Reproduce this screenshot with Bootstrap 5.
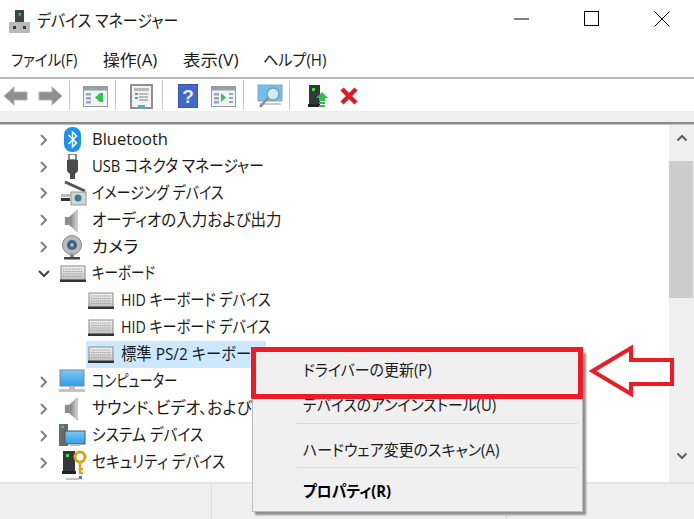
<!DOCTYPE html>
<html lang="ja">
<head>
<meta charset="utf-8">
<title>デバイス マネージャー</title>
<link href="https://cdn.jsdelivr.net/npm/bootstrap@5.3.0/dist/css/bootstrap.min.css" rel="stylesheet">
<style>
html,body{margin:0;height:100%;overflow:hidden;background:#fff}
body{font-family:"Open Sans","Noto Sans CJK JP",sans-serif;font-size:16.5px;color:#1a1a1a;line-height:1;font-feature-settings:"palt"}
.dm-win{position:relative;width:694px;height:519px;overflow:hidden}
.dm-title{height:44px;padding-left:9px}
.dm-title-text{margin-left:7px;font-size:17px;margin-top:-2px;transform-origin:left center;transform:scaleX(.88)}
.dm-winbtns{margin-left:auto;margin-right:-3px;align-self:flex-start}
.dm-winbtn{width:70px;height:38px}
.dm-menubar{height:32px;padding-left:11px;padding-top:2px;font-size:15.6px;border-bottom:2px solid #b9b9b9;box-sizing:content-box}
.dm-m1{width:92px}
.dm-m2{width:80px}
.dm-tx{display:inline-block;transform-origin:left center;white-space:nowrap}
.k80{transform:scaleX(.8)}.k82{transform:scaleX(.82)}.k85{transform:scaleX(.85)}.k86{transform:scaleX(.86)}.k89{transform:scaleX(.89)}.k90{transform:scaleX(.895)}
.k93{transform:scaleX(.93)}.k94{transform:scaleX(.94)}.k95{transform:scaleX(.95)}.k96{transform:scaleX(.96)}.k97{transform:scaleX(.97)}.k105{transform:scaleX(1.05)}.k108{transform:scaleX(1.08)}.k112{transform:scaleX(1.12)}
.dm-toolbar{height:33px;padding-left:3px;padding-top:3px}
.dm-tsep{width:1px;height:30px;background:#c8c8c8;margin-top:-3px}
.g6{margin-left:6px}.g7{margin-left:7px}.g9{margin-left:9px}.g10{margin-left:10px}.g11{margin-left:11px}.g13{margin-left:13px}.g14{margin-left:14px}.g15{margin-left:15px}.g18{margin-left:18px}
.dm-band{height:11px;background:#eeeeee}
.dm-rule{height:3px;background:#8a8a8a;border-bottom:1px solid #c4c4c4}
.dm-main{height:357px}
.dm-tree{padding-top:1.5px;overflow:hidden}
.dm-row{height:26.92px;flex:none}
.dm-chev{width:26px;margin-left:31px;flex:none}
.dm-ico{width:30px;flex:none;margin-left:2px}
.dm-lbl{margin-left:3px;white-space:nowrap;margin-top:-1px;transform-origin:left center}
.dm-child{padding-left:86px}
.dm-child .dm-ico{margin:0}
.dm-child .dm-lbl{margin-left:5px}
.dm-sel{background:#cce8ff;width:180px;margin-left:86px}
.dm-sel .dm-ico{margin:0}
.dm-sel .dm-lbl{margin-left:5px}
.dm-scroll{width:25px;background:#f0f0f0;flex:none}
.dm-scrollup{height:36px;padding-top:9px}
.dm-thumb{height:137px;width:24px;background:#cdcdcd}
.dm-scrolldown{margin-top:auto;height:22px;margin-bottom:8px}
.dm-status{height:38px;background:#f0f0f0;border-top:2px solid #e4e4e4}
.dm-cell{border-right:1px solid #dcdcdc}
.dm-c1{width:212px}
.dm-c2{width:295px}
.dm-ctx{position:absolute;display:block;left:252px;top:350px;width:331px;height:162px;min-width:0;padding:0;margin:0;background:#f0f0f0;border:1px solid #bdbdbd;border-radius:0;box-shadow:3px 3px 2px #8f8f8f;color:#1a1a1a}
.dm-ctx .dropdown-item{padding:0 0 0 50px;color:#1a1a1a;background:none;line-height:1;font-size:15.6px;display:flex;align-items:center}
.dm-i1{height:40px}
.dm-i2{height:30px}
.dm-ctx .dm-i3{height:43px;padding-top:10px}
.dm-ctx .dm-i4{height:44px;padding-top:4px;font-weight:700;color:#000}
.dm-ctx .dropdown-divider{margin:0 4px 0 44px;border-top:1px solid #dadada;opacity:1}
.dm-gap{height:2px}
.dm-redbox{position:absolute;z-index:1001;left:251px;top:347px;width:332px;height:52px;border:5px solid #ed1c24}
.dm-arrow{position:absolute;z-index:1001;left:586px;top:342px}
</style>
</head>
<body>
<svg width="0" height="0" class="position-absolute">
<defs>
<linearGradient id="gk" x1="0" y1="0" x2="0" y2="1"><stop offset="0" stop-color="#f2f2f2"/><stop offset="1" stop-color="#bdbdbd"/></linearGradient>
<linearGradient id="gs" x1="0" y1="0" x2="1" y2="0"><stop offset="0" stop-color="#777"/><stop offset="1" stop-color="#d8d8d8"/></linearGradient>
<linearGradient id="gm" x1="0" y1="0" x2="0" y2="1"><stop offset="0" stop-color="#7cc8f5"/><stop offset="1" stop-color="#2f9fe6"/></linearGradient>
<symbol id="chevr" viewBox="0 0 10 14"><path d="M2 2l5 5-5 5" fill="none" stroke="#808080" stroke-width="2"/></symbol>
<symbol id="kbd" viewBox="0 0 26 18">
<rect x="1" y="1" width="24" height="15" fill="url(#gk)" stroke="#8a8a8a"/>
<path d="M3 4h20M3 6.500h20M3 9h20M3 11.500h20" stroke="#a4a4a4" stroke-width="1.200" stroke-dasharray="1.400 .8"/>
<rect x="0" y="14.500" width="26" height="2.500" fill="#333"/>
</symbol>
<symbol id="spk" viewBox="0 0 18 28">
<path d="M1 10h5v9H1z" fill="#8c8c8c"/><path d="M6 10l9-8v25l-9-8z" fill="url(#gs)" stroke="#999" stroke-width=".6"/>
</symbol>
<symbol id="pane" viewBox="0 0 25 21">
<rect x=".5" y=".5" width="24" height="20" fill="#f3f3f3" stroke="#9a9a9a"/><rect x="1" y="1" width="23" height="3.500" fill="#9aa0a6"/>
<rect x="3" y="7" width="5" height="2.500" fill="#8fa8c8"/><rect x="3" y="11" width="5" height="2.500" fill="#8fa8c8"/><rect x="3" y="15" width="5" height="2.500" fill="#8fa8c8"/>
</symbol>
</defs>
</svg>
<div class="dm-win d-flex flex-column">
  <div class="dm-title d-flex align-items-center">
    <svg width="21" height="25" viewBox="0 0 21 25"><rect x="6" y="1" width="9" height="13" fill="#3f4347"/><rect x="9.500" y="4" width="2.500" height="2.500" fill="#35d04a"/><rect x="0" y="13" width="21" height="11" rx="1" fill="#b9b9b9"/><rect x="4" y="17" width="3" height="3" fill="#3a3a3a"/><rect x="14" y="17" width="3" height="3" fill="#3a3a3a"/></svg>
    <span class="dm-title-text">デバイス マネージャー</span>
    <div class="dm-winbtns d-flex">
      <div class="dm-winbtn d-flex align-items-center justify-content-center"><svg width="16" height="16"><path d="M0 8h15" stroke="#000"/></svg></div>
      <div class="dm-winbtn d-flex align-items-center justify-content-center"><svg width="16" height="16"><rect x=".5" y=".5" width="14" height="14" fill="none" stroke="#000"/></svg></div>
      <div class="dm-winbtn d-flex align-items-center justify-content-center"><svg width="16" height="16"><path d="M.5.500l15 15M15.500.500l-15 15" stroke="#000"/></svg></div>
    </div>
  </div>
  <div class="dm-menubar d-flex align-items-center">
    <div class="dm-m1"><span class="dm-tx k93">ファイル(F)</span></div><div class="dm-m2"><span class="dm-tx k108">操作(A)</span></div><div class="dm-m2"><span class="dm-tx k112">表示(V)</span></div><div><span class="dm-tx k97">ヘルプ(H)</span></div>
  </div>
  <div class="dm-toolbar d-flex align-items-center">
    <svg width="25" height="22" viewBox="0 0 25 22"><path d="M1 11L11 2v5h13v8H11v5z" fill="#8e8e8e" stroke="#b5b5b5"/></svg>
    <svg width="25" height="22" viewBox="0 0 25 22" class="g10"><path d="M24 11L14 2v5H1v8h13v5z" fill="#8e8e8e" stroke="#b5b5b5"/></svg>
    <div class="dm-tsep g6"></div>
    <svg width="25" height="21" viewBox="0 0 25 21" class="g13"><use href="#pane"/><path d="M17 7v9l-5-4.500z" fill="#35c24a"/><rect x="17" y="7" width="3" height="9" fill="#35c24a"/></svg>
    <div class="dm-tsep g7"></div>
    <svg width="23" height="25" viewBox="0 0 23 25" class="g14"><rect x="1" y="1" width="21" height="23" fill="#f2f2f2" stroke="#8f8f8f" stroke-width="2"/><rect x="4" y="4" width="15" height="3" fill="#bbb"/><rect x="5" y="9" width="3" height="2" fill="#5a9bd5"/><path d="M9 10h9M9 13h9M9 16h9" stroke="#888"/><rect x="5" y="13" width="3" height="2" fill="#5a9bd5"/><rect x="8" y="21" width="7" height="2.500" fill="#3fb4e8"/></svg>
    <div class="dm-tsep g9"></div>
    <svg width="20" height="24" viewBox="0 0 20 24" class="g15"><rect width="20" height="24" fill="#3654b4"/><rect x="1" y="1" width="18" height="22" fill="#4468c8"/><text x="10" y="19" text-anchor="middle" font-family="Liberation Sans" font-weight="700" font-size="19" fill="#e8ecf8">?</text></svg>
    <svg width="25" height="21" viewBox="0 0 25 21" class="g13"><use href="#pane"/><path d="M10 7l5 4.500L10 16z" fill="#35c24a"/><rect x="18" y="7" width="4" height="2" fill="#8fa8c8"/><rect x="18" y="11" width="4" height="2" fill="#8fa8c8"/><rect x="18" y="15" width="4" height="2" fill="#8fa8c8"/></svg>
    <div class="dm-tsep g7"></div>
    <svg width="26" height="25" viewBox="0 0 26 25" class="g13"><rect x="1" y="1" width="24" height="16" fill="#6cc0ee" stroke="#88a8bc"/><rect x="3" y="19" width="21" height="2" fill="#c8c8c8"/><circle cx="16" cy="10" r="6" fill="#cfeafa" stroke="#8a9aa4" stroke-width="1.500"/><path d="M11 14l-8 9" stroke="#8a8a8a" stroke-width="2.500"/></svg>
    <div class="dm-tsep g6"></div>
    <svg width="20" height="25" viewBox="0 0 20 25" class="g18"><rect x="1" y="1" width="11" height="19" fill="#33373b"/><rect x="4" y="4" width="3" height="3" fill="#35e04a"/><rect x="0" y="20" width="12" height="3" fill="#222"/><path d="M14 8l6 6h-3v3h-6v-3H8z" fill="#2cc24a"/><path d="M11 19h6M11 22h6" stroke="#2cc24a" stroke-width="1.800"/></svg>
    <svg width="20" height="20" viewBox="0 0 20 20" class="g11"><path d="M3 3l14 14M17 3L3 17" stroke="#dc1c24" stroke-width="4.500"/></svg>
  </div>
  <div class="dm-band"></div>
  <div class="dm-rule"></div>
  <div class="dm-main d-flex">
    <div class="dm-tree flex-grow-1 d-flex flex-column">
      <div class="dm-row d-flex align-items-center"><svg class="dm-chev" height="14" viewBox="0 0 26 14"><use href="#chevr" width="10" height="14" x="8"/></svg><svg class="dm-ico" height="25" viewBox="0 0 30 25"><rect x="5" y="0" width="17" height="25" rx="8" fill="#1e90f0"/><path d="M9.500 8l8 8-4 4V5l4 4-8 8" fill="none" stroke="#fff" stroke-width="1.500"/></svg><span class="dm-lbl">Bluetooth</span></div>
      <div class="dm-row d-flex align-items-center"><svg class="dm-chev" height="14" viewBox="0 0 26 14"><use href="#chevr" width="10" height="14" x="8"/></svg><svg class="dm-ico" height="25" viewBox="0 0 30 25"><rect x="10" y="0" width="7" height="6" fill="none" stroke="#666" stroke-width="1.500"/><path d="M8 6h11v11l-3 3v5h-5v-5l-3-3z" fill="#4a4a4a"/></svg><span class="dm-lbl k90">USB コネクタ マネージャー</span></div>
      <div class="dm-row d-flex align-items-center"><svg class="dm-chev" height="14" viewBox="0 0 26 14"><use href="#chevr" width="10" height="14" x="8"/></svg><svg class="dm-ico" height="25" viewBox="0 0 30 25"><path d="M6 1l20 9" stroke="#555" stroke-width="3"/><rect x="2" y="13" width="11" height="3" fill="#bbb"/><rect x="2" y="17" width="9" height="3" fill="#333"/><rect x="12" y="11" width="15" height="13" fill="#cfd5d5" stroke="#999"/><circle cx="19" cy="17" r="3.500" fill="#3b7f8f"/></svg><span class="dm-lbl k85">イメージング デバイス</span></div>
      <div class="dm-row d-flex align-items-center"><svg class="dm-chev" height="14" viewBox="0 0 26 14"><use href="#chevr" width="10" height="14" x="8"/></svg><svg class="dm-ico" height="25" viewBox="0 0 30 25"><use href="#spk" x="4" width="18" height="25"/></svg><span class="dm-lbl k94">オーディオの入力および出力</span></div>
      <div class="dm-row d-flex align-items-center"><svg class="dm-chev" height="14" viewBox="0 0 26 14"><use href="#chevr" width="10" height="14" x="8"/></svg><svg class="dm-ico" height="25" viewBox="0 0 30 25"><circle cx="13" cy="10" r="9.500" fill="#bbb" stroke="#888"/><circle cx="13" cy="10" r="5" fill="#3f5f85"/><circle cx="13" cy="10" r="2" fill="#8ab8e0"/><path d="M11 19h4v3h-4z" fill="#888"/><rect x="5" y="22" width="16" height="2.500" fill="#444"/></svg><span class="dm-lbl k105">カメラ</span></div>
      <div class="dm-row d-flex align-items-center"><svg class="dm-chev" height="14" viewBox="0 0 26 14"><path d="M8 4l5 5 5-5" fill="none" stroke="#444" stroke-width="2"/></svg><svg class="dm-ico" height="18" viewBox="0 0 30 18"><use href="#kbd" x="1" width="26" height="18"/></svg><span class="dm-lbl k82">キーボード</span></div>
      <div class="dm-row dm-child d-flex align-items-center"><svg class="dm-ico" height="18" viewBox="0 0 30 18"><use href="#kbd" x="2" width="26" height="18"/></svg><span class="dm-lbl k86">HID キーボード デバイス</span></div>
      <div class="dm-row dm-child d-flex align-items-center"><svg class="dm-ico" height="18" viewBox="0 0 30 18"><use href="#kbd" x="2" width="26" height="18"/></svg><span class="dm-lbl k86">HID キーボード デバイス</span></div>
      <div class="dm-row dm-sel d-flex align-items-center"><svg class="dm-ico" height="18" viewBox="0 0 30 18"><use href="#kbd" x="2" width="26" height="18"/></svg><span class="dm-lbl k93">標準 PS/2 キーボード</span></div>
      <div class="dm-row d-flex align-items-center"><svg class="dm-chev" height="14" viewBox="0 0 26 14"><use href="#chevr" width="10" height="14" x="8"/></svg><svg class="dm-ico" height="25" viewBox="0 0 30 25"><rect x="1" y="1" width="24" height="16" fill="url(#gm)" stroke="#7a8a96"/><rect x="10" y="17" width="6" height="3" fill="#bbb"/><rect x="0" y="20" width="26" height="3" fill="#c4c4c4"/></svg><span class="dm-lbl k80">コンピューター</span></div>
      <div class="dm-row d-flex align-items-center"><svg class="dm-chev" height="14" viewBox="0 0 26 14"><use href="#chevr" width="10" height="14" x="8"/></svg><svg class="dm-ico" height="25" viewBox="0 0 30 25"><use href="#spk" x="4" width="18" height="25"/></svg><span class="dm-lbl k97">サウンド、ビデオ、および</span></div>
      <div class="dm-row d-flex align-items-center"><svg class="dm-chev" height="14" viewBox="0 0 26 14"><use href="#chevr" width="10" height="14" x="8"/></svg><svg class="dm-ico" height="25" viewBox="0 0 30 25"><rect x="0" y="1" width="9" height="22" fill="#6a6a6a"/><rect x="2" y="3" width="3" height="2" fill="#35d04a"/><rect x="6" y="8" width="20" height="13" fill="url(#gm)" stroke="#555"/><rect x="11" y="21" width="10" height="2" fill="#bbb"/></svg><span class="dm-lbl k90">システム デバイス</span></div>
      <div class="dm-row d-flex align-items-center"><svg class="dm-chev" height="14" viewBox="0 0 26 14"><use href="#chevr" width="10" height="14" x="8"/></svg><svg class="dm-ico" height="25" viewBox="0 0 30 25"><rect x="4" y="1" width="12" height="20" fill="#33373b"/><rect x="7" y="4" width="3" height="3" fill="#35e04a"/><rect x="3" y="21" width="14" height="3" fill="#222"/><circle cx="21" cy="7" r="5" fill="none" stroke="#d9a520" stroke-width="3"/><path d="M21 12v12M21 19h3M21 23h3" stroke="#d9a520" stroke-width="2.500"/></svg><span class="dm-lbl k89">セキュリティ デバイス</span></div>
      <div class="dm-row d-flex align-items-start"><svg class="dm-chev" height="4" viewBox="0 0 26 4"></svg><svg class="dm-ico" height="6" viewBox="0 0 30 6"><rect x="7" y="2" width="13" height="2" fill="#c4c4c4"/><rect x="20" y="0" width="3" height="3" fill="#1e88e5"/></svg></div>
    </div>
    <div class="dm-scroll d-flex flex-column">
      <div class="dm-scrollup d-flex justify-content-center"><svg width="12" height="8" viewBox="0 0 12 8"><path d="M1.500 6.500L6 2l4.500 4.500" fill="none" stroke="#606060" stroke-width="2"/></svg></div>
      <div class="dm-thumb"></div>
      <div class="dm-scrolldown d-flex justify-content-center"><svg width="12" height="8" viewBox="0 0 12 8"><path d="M1.500 1.500L6 6l4.500-4.500" fill="none" stroke="#606060" stroke-width="2"/></svg></div>
    </div>
  </div>
  <div class="dm-status d-flex">
    <div class="dm-cell dm-c1"></div>
    <div class="dm-cell dm-c2"></div>
  </div>
  <ul class="dropdown-menu show dm-ctx list-unstyled">
    <li><a class="dropdown-item dm-i1" href="#"><span class="dm-tx k96">ドライバーの更新(P)</span></a></li>
    <li><a class="dropdown-item dm-i2" href="#"><span class="dm-tx k95">デバイスのアンインストール(U)</span></a></li>
    <li class="dm-gap"></li>
    <li><hr class="dropdown-divider"></li>
    <li><a class="dropdown-item dm-i3" href="#"><span class="dm-tx k96">ハードウェア変更のスキャン(A)</span></a></li>
    <li><hr class="dropdown-divider"></li>
    <li><a class="dropdown-item dm-i4" href="#"><span class="dm-tx k95">プロパティ(R)</span></a></li>
  </ul>
  <div class="dm-redbox"></div>
  <svg class="dm-arrow" width="92" height="60" viewBox="0 0 92 60"><path d="M6.500 29L45 6v12h41v24H45v10z" fill="#fff" stroke="#ed1c24" stroke-width="4"/></svg>
</div>
</body>
</html>
